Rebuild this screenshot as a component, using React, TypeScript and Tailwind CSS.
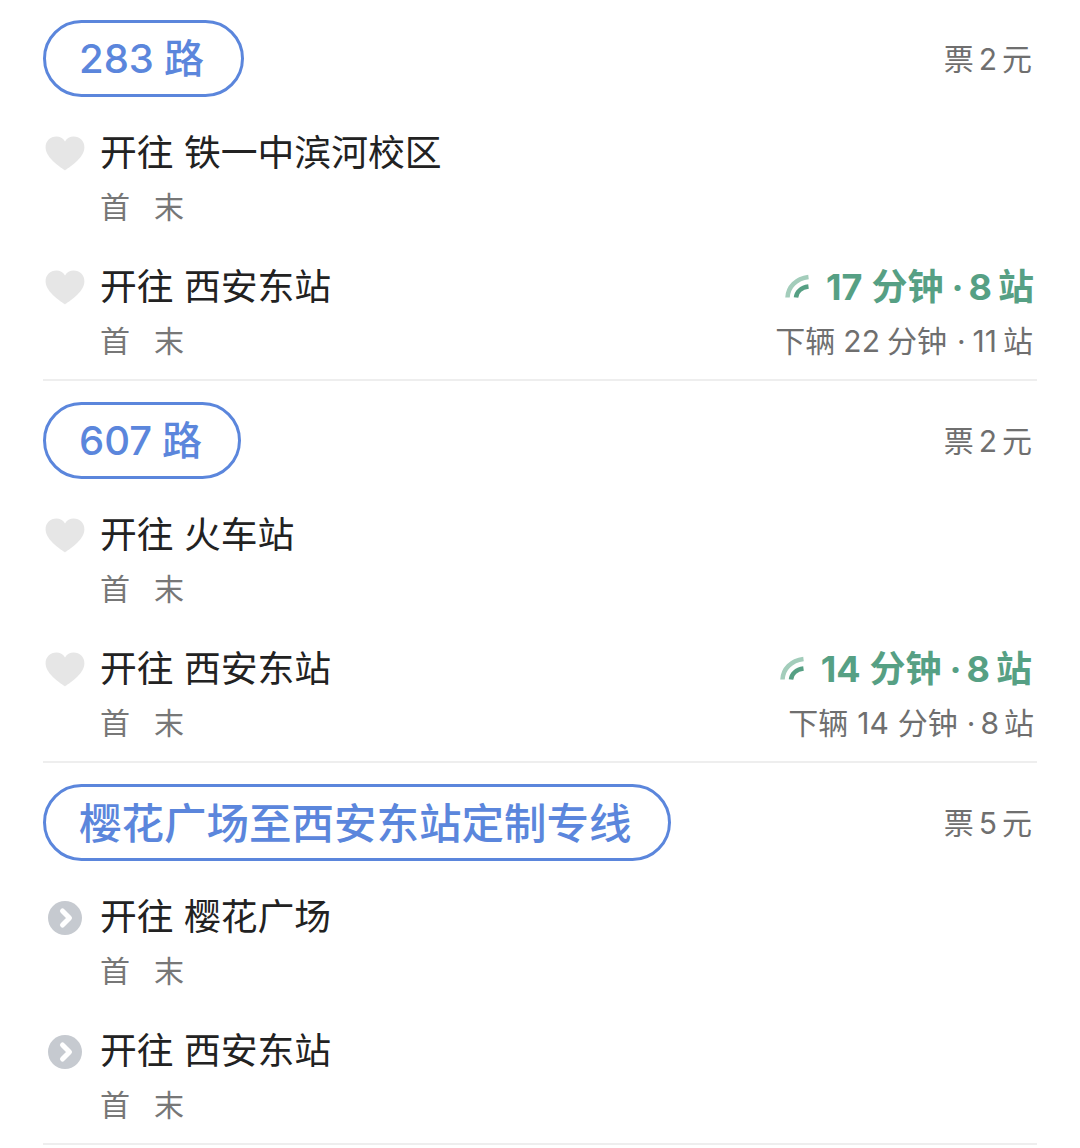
import React from 'react';

type Part = { text: string; gap: string };
type Row = { dest: string; icon: 'heart' | 'arrow'; eta?: Part[]; etaPad?: string; next?: Part[]; nextPad?: string };
type Line = { num?: string; name: string; fare: string; pillClass: string; textClass: string; rows: Row[] };

const lines: Line[] = [
  {
    num: '283',
    name: '路',
    fare: '2',
    pillClass: 'w-[201px]',
    textClass: 'text-[40px]',
    rows: [
      { dest: '铁一中滨河校区', icon: 'heart' },
      {
        dest: '西安东站',
        icon: 'heart',
        etaPad: 'pr-[3px]',
        eta: [
          { text: '17', gap: '' },
          { text: '分钟', gap: 'ml-[9px]' },
          { text: '·', gap: 'ml-[8px]' },
          { text: '8', gap: 'ml-[5px]' },
          { text: '站', gap: 'ml-[6px]' },
        ],
        nextPad: 'pr-[4px]',
        next: [
          { text: '下辆', gap: '' },
          { text: '22', gap: 'ml-[8px]' },
          { text: '分钟', gap: 'ml-[7px]' },
          { text: '·', gap: 'ml-[10px]' },
          { text: '11', gap: 'ml-[7px]' },
          { text: '站', gap: 'ml-[6px]' },
        ],
      },
    ],
  },
  {
    num: '607',
    name: '路',
    fare: '2',
    pillClass: 'w-[198px]',
    textClass: 'text-[40px]',
    rows: [
      { dest: '火车站', icon: 'heart' },
      {
        dest: '西安东站',
        icon: 'heart',
        etaPad: 'pr-[5px]',
        eta: [
          { text: '14', gap: '' },
          { text: '分钟', gap: 'ml-[9px]' },
          { text: '·', gap: 'ml-[8px]' },
          { text: '8', gap: 'ml-[5px]' },
          { text: '站', gap: 'ml-[6px]' },
        ],
        nextPad: 'pr-[3px]',
        next: [
          { text: '下辆', gap: '' },
          { text: '14', gap: 'ml-[9px]' },
          { text: '分钟', gap: 'ml-[9px]' },
          { text: '·', gap: 'ml-[9px]' },
          { text: '8', gap: 'ml-[5px]' },
          { text: '站', gap: 'ml-[5px]' },
        ],
      },
    ],
  },
  {
    name: '樱花广场至西安东站定制专线',
    fare: '5',
    pillClass: 'w-[628px]',
    textClass: 'text-[42.500px] pt-[4px]',
    rows: [
      { dest: '樱花广场', icon: 'arrow' },
      { dest: '西安东站', icon: 'arrow' },
    ],
  },
];

const Heart = () => (
  <svg width="40" height="35" viewBox="0 0 40 36" preserveAspectRatio="none" className="block">
    <path
      d="M20 35.500C17 33 1 23.500 .6 12.200.3 5 5.500.6 11.200.6c3.900 0 6.900 1.800 8.800 5 1.900-3.200 4.900-5 8.800-5 5.700 0 10.900 4.400 10.600 11.600C39 23.500 23 33 20 35.500z"
      fill="#e6e6e6"
    />
  </svg>
);

const ArrowDot = () => (
  <svg width="34" height="34" viewBox="0 0 34 34" className="block">
    <circle cx="17" cy="17" r="17" fill="#c6cad0" />
    <path d="M14.500 10l7 7-7 7" fill="none" stroke="#fff" strokeWidth="5" strokeLinecap="round" strokeLinejoin="round" />
  </svg>
);

const Signal = () => (
  <svg width="26" height="26" viewBox="0 0 26 26" className="block">
    <path d="M3.500 23.500C4 13 12 4.500 24.500 3" fill="none" stroke="#a3cdbb" strokeWidth="4.500" />
    <path d="M12 23.500c.5-5.500 5-10 12.500-11" fill="none" stroke="#56a084" strokeWidth="4.500" />
  </svg>
);

function Parts({ parts }: { parts: Part[] }) {
  return (
    <>
      {parts.map((p, i) => (
        <span key={i} className={p.gap}>
          {p.text}
        </span>
      ))}
    </>
  );
}

function RouteRow({ row }: { row: Row }) {
  return (
    <div className="flex">
      <div className="w-[57px] shrink-0">
        {row.icon === 'heart' ? (
          <div className="h-[40px] flex items-center pl-[2px]"><Heart /></div>
        ) : (
          <div className="h-[41px] flex items-center pl-[5px]"><ArrowDot /></div>
        )}
      </div>
      <div className="flex-1">
        <div className="flex justify-between items-center h-[40px]">
          <span className="text-[36.800px] leading-[40px] text-[#222222]">开往 {row.dest}</span>
          {row.eta && (
            <span className={`flex items-center gap-[16px] text-[36px] leading-[40px] font-bold text-[#56a084] ${row.etaPad}`}>
              <Signal />
              <span className="flex"><Parts parts={row.eta} /></span>
            </span>
          )}
        </div>
        <div className="mt-[14px] flex justify-between items-center h-[40px] text-[#777777]">
          <span className="flex gap-[24px] text-[30px] leading-[38px]">
            <span>首</span>
            <span>末</span>
          </span>
          {row.next && (
            <span className={`flex text-[30px] leading-[40px] text-[#6f6f6f] ${row.nextPad}`}><Parts parts={row.next} /></span>
          )}
        </div>
      </div>
    </div>
  );
}

function LineBlock({ line, first }: { line: Line; first: boolean }) {
  return (
    <section className={`mx-[43px] border-b-2 border-[#eeeeee] pb-[18px] ${first ? 'pt-[20px]' : 'pt-[21px]'}`}>
      <div className="flex justify-between items-center">
        <div className={`h-[77px] ${line.pillClass} rounded-full border-[3.500px] border-[#5b86dc] flex items-center pl-[33px] ${line.textClass} leading-none font-medium text-[#5b86dc] whitespace-nowrap`}>
          {line.num && <span className="mr-[10px]">{line.num}</span>}
          <span>{line.name}</span>
        </div>
        <div className="flex gap-[5px] pr-[5px] text-[#6f6f6f] text-[30px] leading-[40px]">
          <span>票</span>
          <span>{line.fare}</span>
          <span>元</span>
        </div>
      </div>
      <div className="mt-[36px] flex flex-col gap-[40px]">
        {line.rows.map((row, i) => (
          <RouteRow key={i} row={row} />
        ))}
      </div>
    </section>
  );
}

export default function App() {
  return (
    <div className="w-[1080px] h-[1148px] overflow-hidden bg-white font-['Inter','Noto_Sans_CJK_SC',sans-serif]">
      {lines.map((line, i) => (
        <LineBlock key={line.name + i} line={line} first={i === 0} />
      ))}
    </div>
  );
}
